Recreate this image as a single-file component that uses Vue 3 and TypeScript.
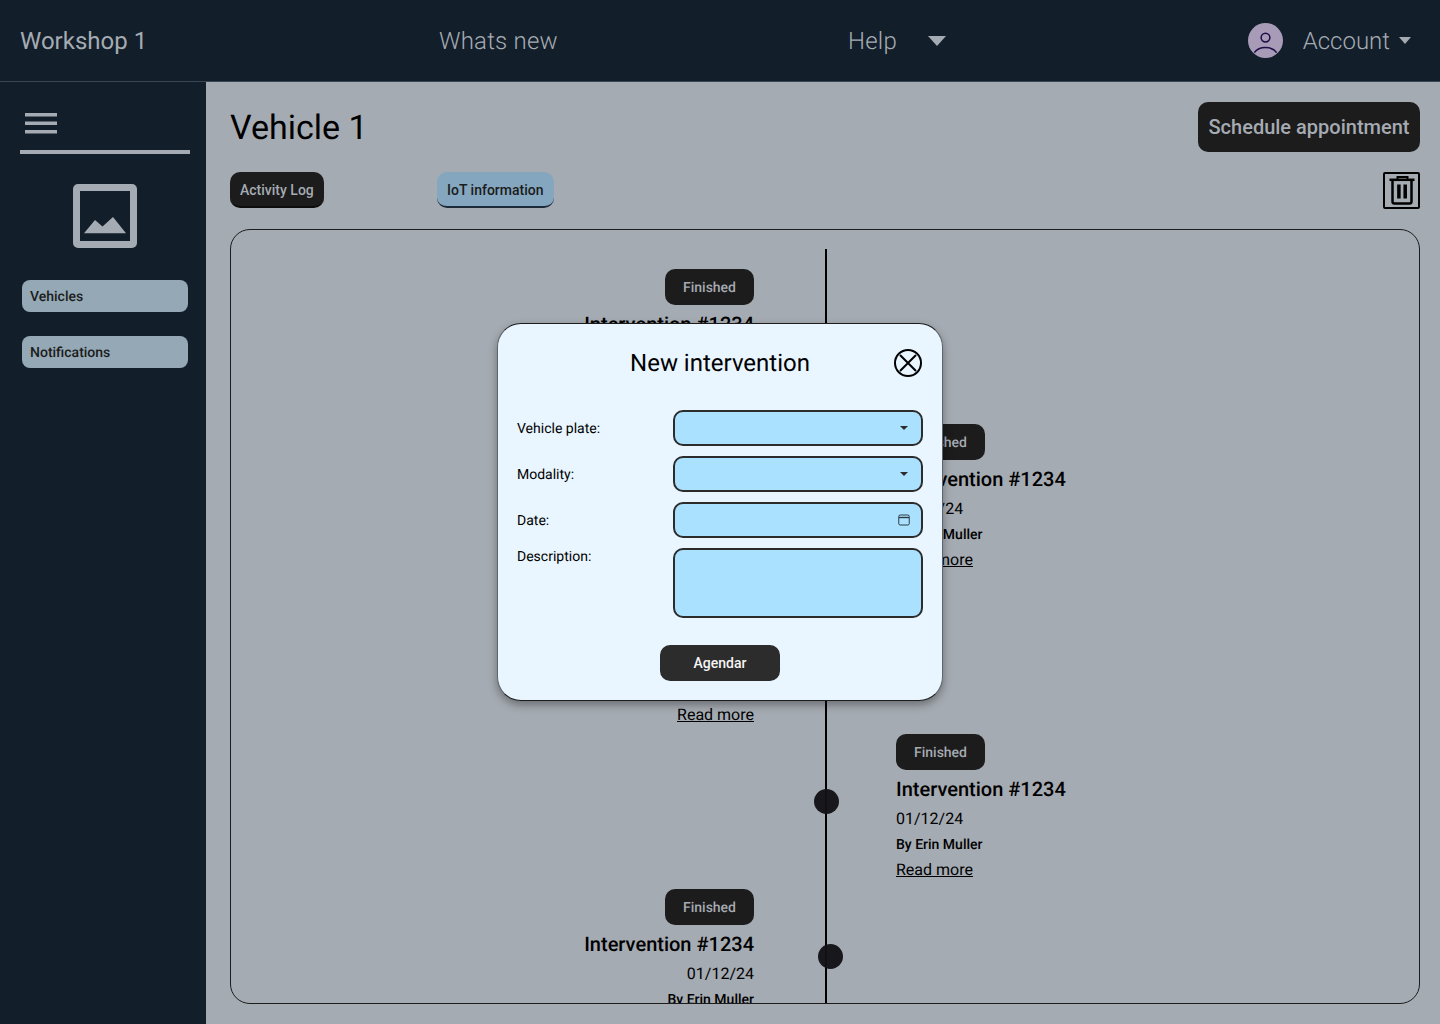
<script setup lang="ts">
const navItems = ['Vehicles', 'Notifications']

const timeline: { side: 'left' | 'right' }[] = [
  { side: 'left' },
  { side: 'right' },
  { side: 'left' },
  { side: 'right' },
  { side: 'left' },
]

const fields = [
  { label: 'Vehicle plate:', kind: 'select' },
  { label: 'Modality:', kind: 'select' },
  { label: 'Date:', kind: 'date' },
  { label: 'Description:', kind: 'text' },
]
</script>

<template>
  <div class="page">
    <header class="topbar">
      <span class="brand">Workshop 1</span>
      <span class="top-link whats">Whats new</span>
      <span class="top-link help">
        Help
        <svg class="help-caret" width="18" height="10" viewBox="0 0 18 10"><path d="M0 0h18L9 10z" /></svg>
      </span>
      <span class="account">
        <span class="avatar">
          <svg width="36" height="36" viewBox="0 0 36 36" fill="none" stroke="#1d0f45" stroke-width="1.6">
            <circle cx="18" cy="14.500" r="4.500" />
            <path d="M6.500 30C9 26.500 13.500 24.700 18 24.700S27 26.500 29.500 30" />
          </svg>
        </span>
        <span class="account-name">Account</span>
        <svg class="account-caret" width="12" height="7" viewBox="0 0 12 7"><path d="M0 0h12L6 7z" /></svg>
      </span>
    </header>

    <div class="body">
      <aside class="sidebar">
        <div class="menu-row">
          <svg width="32" height="22" viewBox="0 0 32 22" fill="#a5abb2">
            <rect y="0" width="32" height="3.500" />
            <rect y="8.500" width="32" height="3.500" />
            <rect y="17" width="32" height="3.500" />
          </svg>
        </div>
        <div class="logo">
          <svg width="64" height="64" viewBox="0 0 64 64" fill="#a5abb2">
            <path fill-rule="evenodd" d="M5 0h54a5 5 0 0 1 5 5v54a5 5 0 0 1-5 5H5a5 5 0 0 1-5-5V5a5 5 0 0 1 5-5zM7 7v50h50V7z" />
            <path d="M11 49.300 22 36 29.500 42.500 40 33 53 49.300z" />
          </svg>
        </div>
        <nav class="side-nav">
          <a v-for="item in navItems" :key="item" class="side-btn">{{ item }}</a>
        </nav>
      </aside>

      <main class="main">
        <div class="title-row">
          <h1>Vehicle 1</h1>
          <button class="schedule">Schedule appointment</button>
        </div>

        <div class="tabs">
          <button class="tab tab-dark">Activity Log</button>
          <button class="tab tab-blue">IoT information</button>
          <button class="trash">
            <svg width="26" height="32" viewBox="0 0 26 32" fill="none" stroke="#000">
              <path d="M.500 4.800h25" stroke-width="2.500" />
              <path d="M8.500 4V2h10v2" stroke-width="2" />
              <path d="M3.500 5v21.500a2 2 0 0 0 2 2h15a2 2 0 0 0 2-2V5" stroke-width="2.500" />
              <path d="M9.900 9.500v14M16.200 9.500v14" stroke-width="3.500" />
            </svg>
          </button>
        </div>

        <section class="log">
          <div class="line" />
          <div v-for="(entry, i) in timeline" :key="i" class="entry" :class="entry.side">
            <div class="entry-text">
              <span class="badge">Finished</span>
              <span class="entry-title">Intervention #1234</span>
              <span class="entry-date">01/12/24</span>
              <span class="entry-by">By Erin Muller</span>
              <a class="entry-more">Read more</a>
            </div>
            <div class="dot" />
          </div>
        </section>
      </main>
    </div>

    <div class="overlay">
      <form class="modal">
        <div class="modal-head">
          <h2>New intervention</h2>
          <svg class="close" width="30" height="30" viewBox="0 0 30 30" fill="none" stroke="#000" stroke-width="2">
            <circle cx="15" cy="15" r="13" />
            <path d="m7 7 16 16M23 7 7 23" />
          </svg>
        </div>

        <div class="fields">
          <div v-for="field in fields" :key="field.label" class="field-row">
            <label>{{ field.label }}</label>
            <div class="input" :class="field.kind">
              <svg v-if="field.kind === 'select'" width="12" height="4" viewBox="0 0 12 4"><path d="M2 0h8L6 4z" fill="#2c2c2c" /></svg>
              <svg v-else-if="field.kind === 'date'" width="12" height="12" viewBox="0 0 12 12" fill="none" stroke="#2c3a46">
                <rect x="0.750" y="1" width="10.500" height="10" rx="1.500" />
                <path d="M1 3.500h10" stroke-width="1.400" />
              </svg>
            </div>
          </div>
        </div>

        <button class="submit" type="button">Agendar</button>
      </form>
    </div>
  </div>
</template>

<style scoped>
.page {
  width: 1440px;
  height: 1024px;
  overflow: hidden;
  display: flex;
  flex-direction: column;
  position: relative;
  background: #a5abb2;
  font-family: Roboto, sans-serif;
  color: #000;
  text-rendering: geometricPrecision;
}

.topbar {
  height: 82px;
  box-sizing: border-box;
  flex: none;
  display: flex;
  align-items: center;
  padding: 0 29px 0 20px;
  background: #121e2a;
  border-bottom: 1px solid #3a4653;
  color: #a5abb2;
  font-size: 24px;
}

.brand {
  width: 419px;
}

.top-link {
  font-weight: 300;
  letter-spacing: 0.2px;
}

.account-name {
  font-weight: 300;
}

.whats {
  width: 409px;
}

.help {
  display: flex;
  align-items: center;
  gap: 31px;
}

.help-caret {
  fill: #a5abb2;
}

.account {
  margin-left: auto;
  display: flex;
  align-items: center;
}

.avatar {
  width: 35px;
  height: 35px;
  border-radius: 50%;
  overflow: hidden;
  background: #a89bb8;
  margin-right: 20px;
  display: flex;
  align-items: center;
  justify-content: center;
}

.account-caret {
  fill: #a5abb2;
  margin-left: 9px;
}

.body {
  flex: 1;
  display: flex;
  min-height: 0;
}

.sidebar {
  width: 206px;
  flex: none;
  box-sizing: border-box;
  background: #121e2a;
  padding: 31px 16px 0 20px;
  display: flex;
  flex-direction: column;
}

.menu-row {
  height: 37px;
  padding-left: 5px;
  border-bottom: 4px solid #a5abb2;
}

.logo {
  display: flex;
  justify-content: center;
  padding: 30px 0 32px;
}

.side-nav {
  display: flex;
  flex-direction: column;
  gap: 24px;
  padding: 0 2px;
}

.side-btn {
  height: 32px;
  border-radius: 8px;
  background: #94a9b5;
  color: #1c1c1c;
  font-size: 14px;
  font-weight: 500;
  line-height: 34px;
  padding-left: 8px;
}

.main {
  flex: 1;
  min-width: 0;
  display: flex;
  flex-direction: column;
  gap: 20px;
  padding: 20px 20px 20px 24px;
}

.title-row {
  display: flex;
  align-items: center;
  justify-content: space-between;
  height: 50px;
}

h1 {
  margin: 0;
  padding-top: 2px;
  font-size: 34px;
  font-weight: 400;
}

button {
  font-family: inherit;
  border: none;
  cursor: pointer;
}

.schedule {
  width: 222px;
  height: 50px;
  padding: 0;
  border-radius: 10px;
  background: #1c1c1c;
  color: #a5abb2;
  font-size: 20px;
  font-weight: 500;
}

.tabs {
  display: flex;
  height: 37px;
  align-items: flex-start;
}

.tab {
  height: 36px;
  padding: 2px 10px 0;
  border-radius: 10px;
  font-size: 14px;
  font-weight: 500;
  border-bottom: 2px solid #0c0c0c;
}

.tab-dark {
  background: #1c1c1c;
  color: #a5abb2;
  margin-right: 113px;
}

.tab-blue {
  width: 117px;
  padding-left: 0;
  padding-right: 0;
  background: #84a7bf;
  color: #1c1c1c;
  border-bottom-color: #1c2b3a;
}

.trash {
  margin-left: auto;
  width: 37px;
  height: 37px;
  padding: 0;
  box-sizing: border-box;
  background: transparent;
  border: 2px solid #000;
  border-radius: 2px;
  display: flex;
  align-items: center;
  justify-content: center;
}

.log {
  flex: 1;
  min-height: 0;
  position: relative;
  overflow: hidden;
  border: 1px solid #1c1c1c;
  border-radius: 20px;
  padding-top: 39px;
}

.line {
  position: absolute;
  left: 594px;
  top: 19px;
  bottom: 0;
  width: 2px;
  background: #000;
}

.entry {
  position: relative;
  height: 155px;
  display: grid;
  grid-template-columns: 523px 1fr;
}

.entry-text {
  display: flex;
  flex-direction: column;
  gap: 8px;
}

.entry.left .entry-text {
  grid-column: 1;
  align-items: flex-end;
  text-align: right;
}

.entry.right .entry-text {
  grid-column: 2;
  margin-left: 142px;
  align-items: flex-start;
}

.badge {
  width: 89px;
  height: 36px;
  line-height: 38px;
  text-align: center;
  border-radius: 10px;
  background: #1c1c1c;
  color: #a5abb2;
  font-size: 14px;
  font-weight: 500;
}

.entry-title {
  font-size: 20px;
  font-weight: 500;
  line-height: 22px;
}

.entry-date {
  font-size: 16px;
  line-height: 22px;
  margin-bottom: -1px;
}

.entry-by {
  font-size: 14px;
  font-weight: 500;
  line-height: 16px;
  margin-bottom: -1px;
}

.entry-more {
  font-size: 16px;
  line-height: 20px;
  text-decoration: underline;
}

.dot {
  position: absolute;
  top: 55px;
  width: 25px;
  height: 25px;
  border-radius: 50%;
  background: rgba(18, 18, 22, 0.96);
}

.entry.left .dot {
  left: 587px;
}

.entry.right .dot {
  left: 583px;
}

.overlay {
  position: absolute;
  inset: 0;
  display: flex;
  align-items: center;
  justify-content: center;
}

.modal {
  width: 446px;
  height: 378px;
  box-sizing: border-box;
  background: #e9f6ff;
  border: 1px solid #1c1c1c;
  border-left-color: #5c646c;
  border-right-color: #5c646c;
  border-radius: 24px;
  box-shadow: 0 4px 8px rgba(0, 0, 0, 0.35);
  padding: 19px;
  display: flex;
  flex-direction: column;
  align-items: center;
}

.modal-head {
  align-self: stretch;
  position: relative;
  height: 40px;
  display: flex;
  align-items: center;
  justify-content: center;
}

h2 {
  margin: 0;
  font-size: 24px;
  font-weight: 400;
}

.close {
  position: absolute;
  right: 0;
  top: 5px;
}

.fields {
  align-self: stretch;
  margin-top: 27px;
  display: flex;
  flex-direction: column;
  gap: 10px;
}

.field-row {
  display: flex;
  align-items: center;
  justify-content: space-between;
  font-size: 14px;
}

.field-row label {
  margin-top: 2px;
}

.field-row:last-child {
  align-items: flex-start;
}

.field-row:last-child label {
  margin-top: 0;
  line-height: 18px;
}

.input {
  width: 250px;
  height: 36px;
  box-sizing: border-box;
  background: #aae1ff;
  border: 2px solid #2c2c2c;
  border-radius: 10px;
  display: flex;
  align-items: center;
  justify-content: flex-end;
  padding-right: 11.5px;
}

.input.text {
  height: 70px;
}

.submit {
  margin-top: 27px;
  width: 120px;
  height: 36px;
  padding: 0;
  border-radius: 10px;
  background: #2c2c2c;
  color: #f5f5f5;
  font-size: 14px;
  font-weight: 500;
}
</style>

<style>
body {
  margin: 0;
}
</style>
